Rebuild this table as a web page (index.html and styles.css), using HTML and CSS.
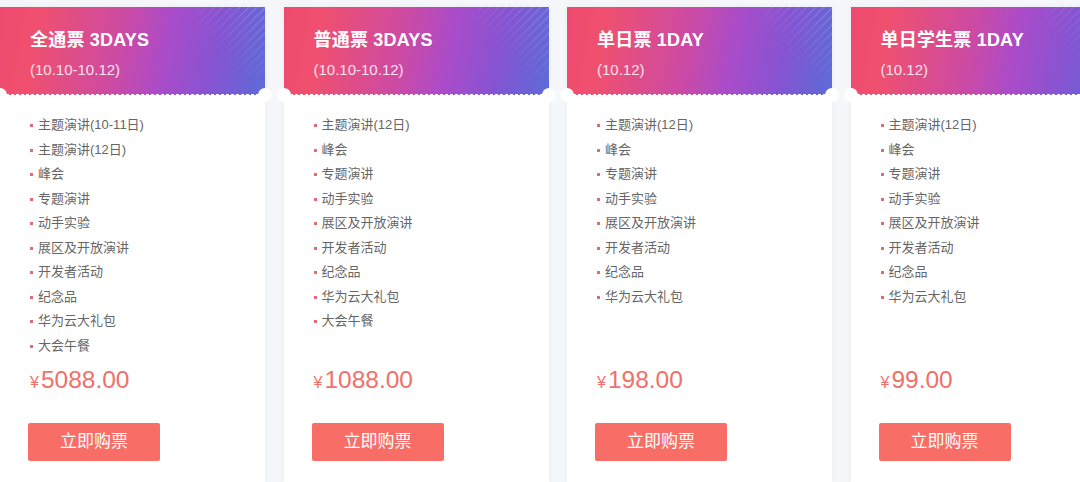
FILE: index.html
```html
<!DOCTYPE html>
<html lang="zh">
<head>
<meta charset="utf-8">
<link rel="stylesheet" href="styles.css">
</head>
<body>
<div class="row">
  <div class="card">
    <div class="head">
      <div class="title">全通票 3DAYS</div>
      <div class="sub">(10.10-10.12)</div>
    </div>
    <ul class="list">
      <li>主题演讲(10-11日)</li>
      <li>主题演讲(12日)</li>
      <li>峰会</li>
      <li>专题演讲</li>
      <li>动手实验</li>
      <li>展区及开放演讲</li>
      <li>开发者活动</li>
      <li>纪念品</li>
      <li>华为云大礼包</li>
      <li>大会午餐</li>
    </ul>
    <div class="price"><span class="yen">¥</span>5088.00</div>
    <div class="btn">立即购票</div>
  </div>
  <div class="card">
    <div class="head">
      <div class="title">普通票 3DAYS</div>
      <div class="sub">(10.10-10.12)</div>
    </div>
    <ul class="list">
      <li>主题演讲(12日)</li>
      <li>峰会</li>
      <li>专题演讲</li>
      <li>动手实验</li>
      <li>展区及开放演讲</li>
      <li>开发者活动</li>
      <li>纪念品</li>
      <li>华为云大礼包</li>
      <li>大会午餐</li>
    </ul>
    <div class="price"><span class="yen">¥</span>1088.00</div>
    <div class="btn">立即购票</div>
  </div>
  <div class="card">
    <div class="head">
      <div class="title">单日票 1DAY</div>
      <div class="sub">(10.12)</div>
    </div>
    <ul class="list">
      <li>主题演讲(12日)</li>
      <li>峰会</li>
      <li>专题演讲</li>
      <li>动手实验</li>
      <li>展区及开放演讲</li>
      <li>开发者活动</li>
      <li>纪念品</li>
      <li>华为云大礼包</li>
    </ul>
    <div class="price"><span class="yen">¥</span>198.00</div>
    <div class="btn">立即购票</div>
  </div>
  <div class="card">
    <div class="head">
      <div class="title">单日学生票 1DAY</div>
      <div class="sub">(10.12)</div>
    </div>
    <ul class="list">
      <li>主题演讲(12日)</li>
      <li>峰会</li>
      <li>专题演讲</li>
      <li>动手实验</li>
      <li>展区及开放演讲</li>
      <li>开发者活动</li>
      <li>纪念品</li>
      <li>华为云大礼包</li>
    </ul>
    <div class="price"><span class="yen">¥</span>99.00</div>
    <div class="btn">立即购票</div>
  </div>
</div>
</body>
</html>
```
FILE: styles.css
```css
html, body {
  margin: 0;
  padding: 0;
  background: #f6f7fa;
}
body {
  font-family: "Liberation Sans", "Noto Sans CJK SC", sans-serif;
  width: 1080px;
  height: 482px;
  overflow: hidden;
}
.row {
  display: flex;
  gap: 18.5px;
  padding-top: 7px;
  width: 1080px;
  height: 482px;
  box-sizing: border-box;
  overflow: hidden;
}
.card {
  flex: none;
  width: 265px;
  height: 475px;
  background: #fff;
  box-shadow: 0 0 6px rgba(60, 70, 110, 0.07);
  position: relative;
}
.head {
  position: relative;
  height: 88px;
  box-sizing: border-box;
  padding: 21px 0 0 30px;
  color: #fff;
  background: linear-gradient(100deg, #ee4a6e 0%, #f0506e 14%, #cc4aa4 45%, #aa4cca 62%, #8654d2 80%, #5c6bd8 100%);
}
.head::before {
  content: "";
  position: absolute;
  top: 0;
  right: 0;
  width: 70px;
  height: 70px;
  background: repeating-linear-gradient(-45deg, rgba(255,255,255,0.12) 0 2px, transparent 2px 6px);
  -webkit-mask-image: linear-gradient(225deg, #000 0%, transparent 70%);
  mask-image: linear-gradient(225deg, #000 0%, transparent 70%);
}
.head::after {
  content: "";
  position: absolute;
  left: 0;
  right: 0;
  bottom: -1px;
  height: 4px;
  background: radial-gradient(circle at 50% 100%, #fff 1.8px, transparent 2.3px) 0 0 / 5px 4px repeat-x;
}
.card::before, .card::after {
  content: "";
  position: absolute;
  top: 81px;
  width: 14px;
  height: 14px;
  border-radius: 50%;
  background: #fff;
  z-index: 2;
}
.card::before { left: -7px; }
.card::after { right: -7px; }
.title {
  font-size: 18px;
  font-weight: bold;
  line-height: 24px;
  letter-spacing: 0.2px;
}
.sub {
  margin-top: 8px;
  font-size: 15px;
  line-height: 19px;
  color: #fbe0f0;
}
.list {
  list-style: none;
  margin: 0;
  padding: 18px 0 0 30px;
  height: 245px;
}
.list li {
  position: relative;
  padding-left: 8px;
  font-size: 13px;
  line-height: 24.5px;
  color: #666;
}
.list li::before {
  content: "";
  position: absolute;
  left: 0;
  top: 11px;
  width: 3px;
  height: 3px;
  background: #e06a78;
}
.price {
  margin: 7px 0 0 30px;
  font-size: 24.5px;
  line-height: 30px;
  color: #f0706a;
}
.yen {
  font-size: 16px;
  margin-right: 2px;
}
.btn {
  margin: 25px 0 0 28px;
  width: 132px;
  height: 38px;
  line-height: 38px;
  text-align: center;
  background: #f86e66;
  border-radius: 2px;
  color: #fff;
  font-size: 17px;
}
```
